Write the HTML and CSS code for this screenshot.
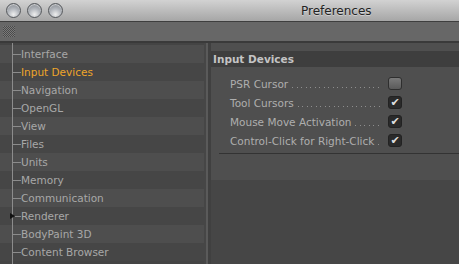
FILE: index.html
```html
<!DOCTYPE html>
<html lang="en">
<head>
  <meta charset="UTF-8">
  <title>Preferences</title>
  <link rel="stylesheet" href="styles.css">
</head>
<body>
  <div class="ventana">
    <div class="titulo">
      <div class="botones">
        <span class="boton"></span>
        <span class="boton"></span>
        <span class="boton"></span>
      </div>
      <span class="nombre">Preferences</span>
    </div>
    <div class="barra"><span class="agarre"></span></div>

    <div class="cuerpo">
      <ul class="arbol">
        <li class="clara"><span class="rama"></span>Interface</li>
        <li class="activa"><span class="rama"></span>Input Devices</li>
        <li class="clara"><span class="rama"></span>Navigation</li>
        <li><span class="rama"></span>OpenGL</li>
        <li class="clara"><span class="rama"></span>View</li>
        <li><span class="rama"></span>Files</li>
        <li class="clara"><span class="rama"></span>Units</li>
        <li><span class="rama"></span>Memory</li>
        <li class="clara"><span class="rama"></span>Communication</li>
        <li class="plegada"><span class="flecha"></span><span class="rama corta"></span>Renderer</li>
        <li class="clara"><span class="rama"></span>BodyPaint 3D</li>
        <li><span class="rama"></span>Content Browser</li>
      </ul>

      <div class="separador"></div>

      <div class="panel">
        <div class="grupo">
          <h2>Input Devices</h2>
          <div class="opciones">
            <div class="opcion"><span class="etiqueta">PSR Cursor</span><span class="puntos"></span><span class="casilla"></span></div>
            <div class="opcion"><span class="etiqueta">Tool Cursors</span><span class="puntos"></span><span class="casilla marcada">&#10004;</span></div>
            <div class="opcion"><span class="etiqueta">Mouse Move Activation</span><span class="puntos"></span><span class="casilla marcada">&#10004;</span></div>
            <div class="opcion"><span class="etiqueta">Control-Click for Right-Click</span><span class="puntos"></span><span class="casilla marcada">&#10004;</span></div>
          </div>
          <div class="linea"></div>
        </div>
      </div>
    </div>
  </div>
</body>
</html>
```

FILE: styles.css
```css
body { margin: 0; background: #464646; font-family: "DejaVu Sans", sans-serif; font-size: 10.5px; overflow: hidden; }
.ventana { width: 459px; height: 264px; display: flex; flex-direction: column; }

.titulo { height: 21px; display: flex; align-items: center; background: linear-gradient(#d2d2d2, #a6a6a6); border-bottom: 1px solid #3e3e3e; }
.botones { display: flex; gap: 6px; padding-left: 6px; }
.boton { width: 13px; height: 13px; border-radius: 50%; border: 1px solid #55585c; background: radial-gradient(circle at 50% 80%, #eeeeee 0, #b4b8be 45%, #7a7e84 100%); box-shadow: inset 0 1px 1px rgba(255,255,255,0.6); }
.nombre { margin-left: 238px; font-size: 12px; color: #222; text-shadow: 0 1px 0 rgba(255,255,255,0.4); }

.barra { height: 19px; background: #676767; border-bottom: 2px solid #3a3a3a; display: flex; align-items: center; }
.agarre { width: 12px; height: 11px; margin-left: 3px; background: repeating-conic-gradient(#4a4a4a 0 25%, #7a7a7a 0 50%) 0 0 / 2px 2px; }

.cuerpo { flex: 1; display: flex; }

.arbol { list-style: none; margin: 0; padding: 2px 0 0; width: 204px; background: linear-gradient(#8c8c8c, #8c8c8c) 12px 0 / 1px 100% no-repeat, #444; }
.arbol li { height: 18px; display: flex; align-items: center; padding-left: 12px; color: #a8a8a8; position: relative; background: linear-gradient(#8c8c8c, #8c8c8c) 12px 0 / 1px 100% no-repeat, #464646; }
.arbol li.clara { background: linear-gradient(#8c8c8c, #8c8c8c) 12px 0 / 1px 100% no-repeat, #4e4e4e; }
.arbol li.activa { color: #eea52a; }
.rama { width: 9px; height: 1px; background: #8c8c8c; }
.rama.corta { width: 6px; margin-left: 3px; }
.flecha { position: absolute; left: 10px; top: 6px; border-left: 5px solid #111; border-top: 3px solid transparent; border-bottom: 3px solid transparent; }

.separador { width: 3px; margin-left: 2px; border-left: 2px solid #5a5a5a; background: #404040; }

.panel { flex: 1; }
.grupo { background: #4f4f4f; padding-top: 8px; height: 129px; }
.grupo h2 { margin: 0; height: 16px; line-height: 16px; padding-left: 2px; font-size: 10.5px; font-weight: bold; color: #c4c4c4; background: #3e3e3e; }
.opciones { padding: 7px 0 0 19px; width: 172px; }
.opcion { height: 19px; display: flex; align-items: center; color: #aeaeae; }
.puntos { flex: 1; height: 1px; align-self: flex-end; margin: 0 6px 5px 4px; background: repeating-linear-gradient(to right, #8e8e8e 0 1px, transparent 1px 4.5px); }
.casilla { width: 12px; height: 11px; border-radius: 3px; border: 1px solid #2e2e2e; background: linear-gradient(#7a7a7a, #5a5a5a); font-size: 11px; line-height: 11px; text-align: center; color: #dedede; }
.casilla.marcada { background: #2a2a2a; border-color: #222; }
.linea { height: 1px; background: #333; margin: 3px 0 0 8px; }
```
